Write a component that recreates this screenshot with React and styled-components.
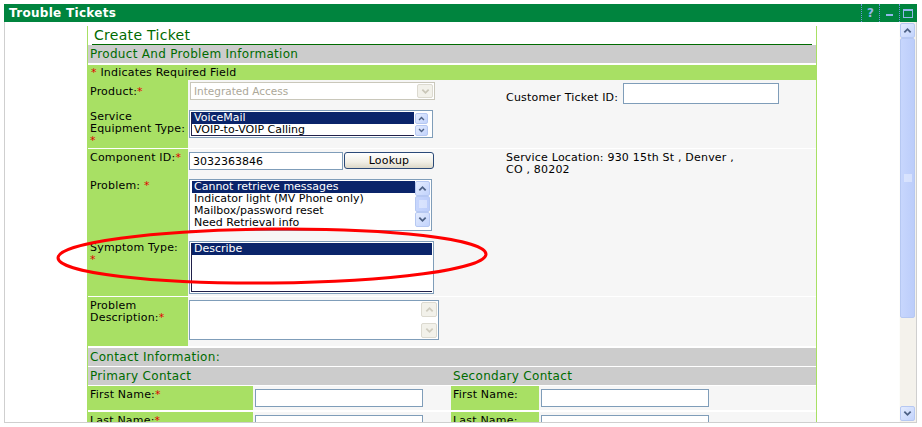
import React from "react";
import styled, { createGlobalStyle } from "styled-components";

const GlobalStyle = createGlobalStyle`
  body {
    margin: 0;
    background: #fff;
    font-family: "DejaVu Sans", Verdana, sans-serif;
  }
`;

const Window = styled.div`
  position: relative;
  width: 913px;
  margin: 4px 0 0 4px;
`;

const TitleBar = styled.div`
  height: 18px;
  background: #00843e;
  display: flex;
  align-items: center;
  justify-content: space-between;
`;

const Title = styled.div`
  color: #fff;
  font-weight: bold;
  font-size: 12px;
  letter-spacing: 0.3px;
  padding-left: 5px;
`;

const Controls = styled.div`
  display: flex;
  height: 100%;
  padding-right: 1px;
`;

const Ctrl = styled.div`
  width: ${(p) => p.$w}px;
  height: 100%;
  border-left: 1px dotted #6f95e0;
  display: flex;
  align-items: center;
  justify-content: center;
  color: #93b6ea;
  font-weight: bold;
  font-size: 12px;
`;

const Frame = styled.div`
  display: flex;
  height: 400px;
  border: 1px solid #cfcfcf;
  border-top: none;
`;

const Viewport = styled.div`
  flex: 1;
  overflow: hidden;
  padding: 4px 0 0 82px;
`;

const Panel = styled.div`
  width: 728px;
  border-left: 1px solid #a8e064;
  border-right: 1px solid #a8e064;
  background: #fff;
`;

const PageHeading = styled.div`
  margin: 0 4px;
  height: 18px;
  border-bottom: 1px solid #006b00;
  color: #006b00;
  font-size: 14px;
  letter-spacing: 0.3px;
  line-height: 18px;
  padding-left: 2px;
`;

const SectionHeader = styled.div`
  display: grid;
  grid-template-columns: ${(p) => p.$cols || "1fr"};
  margin-top: ${(p) => p.$mt || 0}px;
  height: 18px;
  background: #cccccc;
  color: #006b00;
  font-size: 12px;
  letter-spacing: 0.3px;
  line-height: 19px;
  & > span {
    padding-left: 2px;
  }
`;

const RequiredRow = styled.div`
  margin-top: 2px;
  height: 15px;
  background: #a8e064;
  font-size: 11px;
  letter-spacing: 0.2px;
  line-height: 15px;
  padding-left: 3px;
`;

const Star = styled.span`
  color: #e00000;
`;

const FormRow = styled.div`
  display: grid;
  grid-template-columns: 100px 1fr;
  height: ${(p) => p.$h}px;
  margin-top: ${(p) => (p.$sep ? 1 : 0)}px;
`;

const Label = styled.div`
  background: #a8e064;
  font-size: 11px;
  letter-spacing: 0.2px;
  line-height: 12px;
  padding: ${(p) => p.$pt || 2}px 2px 0 2px;
  color: #000;
  white-space: nowrap;
`;

const Value = styled.div`
  background: #f6f6f6;
  display: grid;
  grid-template-columns: 318px 1fr;
  align-items: start;
`;

const Cell = styled.div`
  display: flex;
  align-items: flex-start;
`;

const PlainText = styled.div`
  font-size: 11px;
  letter-spacing: 0.2px;
  line-height: 12px;
  margin-top: ${(p) => p.$mt || 0}px;
  white-space: nowrap;
`;

const TextInput = styled.div`
  box-sizing: border-box;
  width: ${(p) => p.$w}px;
  height: ${(p) => p.$h || 18}px;
  margin: ${(p) => p.$m || "0"};
  border: 1px solid #7f9db9;
  background: #fff;
  font-size: 11px;
  line-height: 17px;
  padding-left: 3px;
`;

const Button = styled.div`
  box-sizing: border-box;
  width: 90px;
  height: 17px;
  margin: 3px 0 0 1px;
  border: 1px solid #2b4a78;
  border-radius: 3px;
  background: linear-gradient(#ffffff, #f1efe6 60%, #dcd8c8);
  font-size: 11px;
  letter-spacing: 0.2px;
  line-height: 15px;
  text-align: center;
`;

const Select = styled.div`
  box-sizing: border-box;
  display: flex;
  width: 245px;
  height: 18px;
  margin: 2px 0 0 2px;
  border: 1px solid #c9c7ba;
  background: #fff;
  padding: 1px;
`;

const SelectText = styled.div`
  flex: 1;
  color: #aca899;
  font-size: 10.5px;
  line-height: 14px;
  padding-left: 2px;
`;

const ListBox = styled.div`
  box-sizing: border-box;
  display: flex;
  width: ${(p) => p.$w}px;
  height: ${(p) => p.$h}px;
  margin: ${(p) => p.$m};
  border: 1px solid #7f9db9;
  background: #fff;
  padding: 1px;
`;

const Items = styled.div`
  flex: 1;
  overflow: hidden;
  border-left: 1px solid ${(p) => (p.$dark ? "#20204a" : "#fff")};
  border-bottom: 1px solid ${(p) => (p.$dark ? "#20204a" : "#fff")};
`;

const Item = styled.div`
  height: 12px;
  font-size: 11px;
  line-height: 12px;
  padding-left: 2px;
  white-space: nowrap;
  background: ${(p) => (p.$sel ? "#0a246a" : "transparent")};
  color: ${(p) => (p.$sel ? "#fff" : "#000")};
`;

const ScrollCol = styled.div`
  display: flex;
  flex-direction: column;
  justify-content: ${(p) => (p.$spread ? "space-between" : "flex-start")};
  gap: ${(p) => p.$gap || 0}px;
  width: ${(p) => p.$w || 15}px;
  padding: ${(p) => p.$pad || "0"};
`;

const ScrollBtn = styled.div`
  box-sizing: border-box;
  width: ${(p) => p.$w || 15}px;
  height: ${(p) => p.$h || 15}px;
  border: 1px solid ${(p) => (p.$off ? "#dcdad0" : "#b6c8f2")};
  border-radius: 2px;
  background: ${(p) =>
    p.$off ? "#f2f1ea" : "linear-gradient(135deg, #e4ecfe, #c2d3fc)"};
  display: flex;
  align-items: center;
  justify-content: center;
`;

const Thumb = styled.div`
  box-sizing: border-box;
  flex: ${(p) => (p.$grow ? "0 0 " + p.$grow + "px" : "1")};
  width: ${(p) => p.$w || 15}px;
  border: 1px solid #b6c8f2;
  border-radius: 2px;
  background: linear-gradient(90deg, #c7d6fd, #bccdfa);
  display: flex;
  align-items: center;
  justify-content: center;
`;

const Track = styled.div`
  flex: 1;
`;

const PageScroll = styled.div`
  display: flex;
  flex-direction: column;
  width: 16px;
  padding: 1px 0;
  background: #f4f2ec;
  border-left: 1px solid #fdfdfb;
`;

const ContactRow = styled.div`
  display: grid;
  grid-template-columns: 165px 198px 88px 1fr;
  height: 24px;
  margin-top: ${(p) => p.$mt || 0}px;
`;

const ContactValue = styled.div`
  background: #f6f6f6;
`;

const Annotation = styled.svg`
  position: absolute;
  left: 50px;
  top: 220px;
  pointer-events: none;
`;

const Chevron = ({ up = true, color = "#4d6185", size = 9 }) => (
  <svg width={size} height={size} viewBox="0 0 10 10">
    <path
      d={up ? "M1.5 7 L5 3.5 L8.5 7" : "M1.5 3 L5 6.5 L8.5 3"}
      fill="none"
      stroke={color}
      strokeWidth="2"
    />
  </svg>
);

const Grip = ({ color = "#eef3ff" }) => (
  <svg width="8" height="8" viewBox="0 0 8 8">
    {[1, 3, 5, 7].map((y) => (
      <line key={y} x1="0" x2="8" y1={y} y2={y} stroke={color} strokeWidth="1" />
    ))}
  </svg>
);

const Req = () => <Star>*</Star>;

export default function App() {
  return (
    <>
      <GlobalStyle />
      <Window>
        <TitleBar>
          <Title>Trouble Tickets</Title>
          <Controls>
            <Ctrl $w={17}>?</Ctrl>
            <Ctrl $w={19}>
              <svg width="7" height="8" viewBox="0 0 7 8">
                <rect x="0" y="5" width="7" height="2" fill="#93b6ea" />
              </svg>
            </Ctrl>
            <Ctrl $w={16}>
              <svg width="10" height="9" viewBox="0 0 10 9">
                <rect x="0.5" y="0.5" width="9" height="8" fill="none" stroke="#93b6ea" />
                <rect x="0" y="0" width="10" height="2" fill="#93b6ea" />
              </svg>
            </Ctrl>
          </Controls>
        </TitleBar>

        <Frame>
          <Viewport>
            <Panel>
              <PageHeading>Create Ticket</PageHeading>
              <SectionHeader>
                <span>Product And Problem Information</span>
              </SectionHeader>
              <RequiredRow>
                <Req /> Indicates Required Field
              </RequiredRow>

              <FormRow $h={28}>
                <Label $pt={6}>
                  Product:<Req />
                </Label>
                <Value>
                  <Cell>
                    <Select>
                      <SelectText>Integrated Access</SelectText>
                      <ScrollBtn $off $w={16} $h={14}>
                        <Chevron up={false} color="#c9c6b8" />
                      </ScrollBtn>
                    </Select>
                  </Cell>
                  <Cell>
                    <PlainText $mt={12}>Customer Ticket ID:</PlainText>
                    <TextInput $w={156} $h={21} $m="3px 0 0 5px" />
                  </Cell>
                </Value>
              </FormRow>

              <FormRow $h={40}>
                <Label $pt={3}>
                  Service
                  <br />
                  Equipment Type:
                  <br />
                  <Req />
                </Label>
                <Value>
                  <Cell>
                    <ListBox $w={244} $h={28} $m="2px 0 0 1px">
                      <Items $dark>
                        <Item $sel>VoiceMail</Item>
                        <Item>VOIP-to-VOIP Calling</Item>
                      </Items>
                      <ScrollCol $w={15} $gap={1} $pad="1px 1px 0 1px">
                        <ScrollBtn $w={13} $h={11}>
                          <Chevron size={7} />
                        </ScrollBtn>
                        <ScrollBtn $w={13} $h={11}>
                          <Chevron size={7} up={false} />
                        </ScrollBtn>
                      </ScrollCol>
                    </ListBox>
                  </Cell>
                </Value>
              </FormRow>

              <FormRow $h={27} $sep>
                <Label $pt={3}>
                  Component ID:<Req />
                </Label>
                <Value>
                  <Cell>
                    <TextInput $w={154} $m="3px 0 0 1px">
                      3032363846
                    </TextInput>
                    <Button>Lookup</Button>
                  </Cell>
                  <Cell>
                    <PlainText $mt={3}>
                      Service Location: 930 15th St , Denver ,
                      <br />
                      CO , 80202
                    </PlainText>
                  </Cell>
                </Value>
              </FormRow>

              <FormRow $h={61}>
                <Label $pt={4}>
                  Problem: <Req />
                </Label>
                <Value>
                  <Cell>
                    <ListBox $w={243} $h={52} $m="3px 0 0 1px">
                      <Items>
                        <Item $sel>Cannot retrieve messages</Item>
                        <Item>Indicator light (MV Phone only)</Item>
                        <Item>Mailbox/password reset</Item>
                        <Item>Need Retrieval info</Item>
                      </Items>
                      <ScrollCol $w={15}>
                        <ScrollBtn>
                          <Chevron />
                        </ScrollBtn>
                        <Thumb $grow={16}>
                          <Grip />
                        </Thumb>
                        <ScrollBtn>
                          <Chevron up={false} />
                        </ScrollBtn>
                      </ScrollCol>
                    </ListBox>
                  </Cell>
                </Value>
              </FormRow>

              <FormRow $h={59}>
                <Label $pt={5}>
                  Symptom Type:
                  <br />
                  <Req />
                </Label>
                <Value>
                  <Cell>
                    <ListBox $w={245} $h={53} $m="4px 0 0 1px">
                      <Items $dark>
                        <Item $sel>Describe</Item>
                      </Items>
                    </ListBox>
                  </Cell>
                </Value>
              </FormRow>

              <FormRow $h={49} $sep>
                <Label $pt={3}>
                  Problem
                  <br />
                  Description:<Req />
                </Label>
                <Value>
                  <Cell>
                    <ListBox $w={250} $h={40} $m="3px 0 0 1px">
                      <Items />
                      <ScrollCol $w={16} $spread>
                        <ScrollBtn $off $w={16}>
                          <Chevron color="#cfccbf" />
                        </ScrollBtn>
                        <ScrollBtn $off $w={16}>
                          <Chevron up={false} color="#cfccbf" />
                        </ScrollBtn>
                      </ScrollCol>
                    </ListBox>
                  </Cell>
                </Value>
              </FormRow>

              <SectionHeader $mt={2}>
                <span>Contact Information:</span>
              </SectionHeader>
              <SectionHeader $mt={1} $cols="363px 1fr">
                <span>Primary Contact</span>
                <span>Secondary Contact</span>
              </SectionHeader>

              <ContactRow $mt={1}>
                <Label $pt={3}>
                  First Name:<Req />
                </Label>
                <ContactValue>
                  <TextInput $w={168} $m="3px 0 0 2px" />
                </ContactValue>
                <Label $pt={3}>First Name:</Label>
                <ContactValue>
                  <TextInput $w={168} $m="3px 0 0 2px" />
                </ContactValue>
              </ContactRow>
              <ContactRow $mt={2}>
                <Label $pt={3}>
                  Last Name:<Req />
                </Label>
                <ContactValue>
                  <TextInput $w={168} $m="3px 0 0 2px" />
                </ContactValue>
                <Label $pt={3}>Last Name:</Label>
                <ContactValue>
                  <TextInput $w={168} $m="3px 0 0 2px" />
                </ContactValue>
              </ContactRow>
            </Panel>
          </Viewport>

          <PageScroll>
            <ScrollBtn>
              <Chevron />
            </ScrollBtn>
            <Thumb $grow={280}>
              <Grip />
            </Thumb>
            <Track />
            <ScrollBtn>
              <Chevron up={false} />
            </ScrollBtn>
          </PageScroll>
        </Frame>

        <Annotation width="440" height="66" viewBox="0 0 440 66">
          <ellipse
            cx="218"
            cy="32"
            rx="214"
            ry="27"
            fill="none"
            stroke="#ff0000"
            strokeWidth="3"
            transform="rotate(-0.5 218 32)"
          />
        </Annotation>
      </Window>
    </>
  );
}
